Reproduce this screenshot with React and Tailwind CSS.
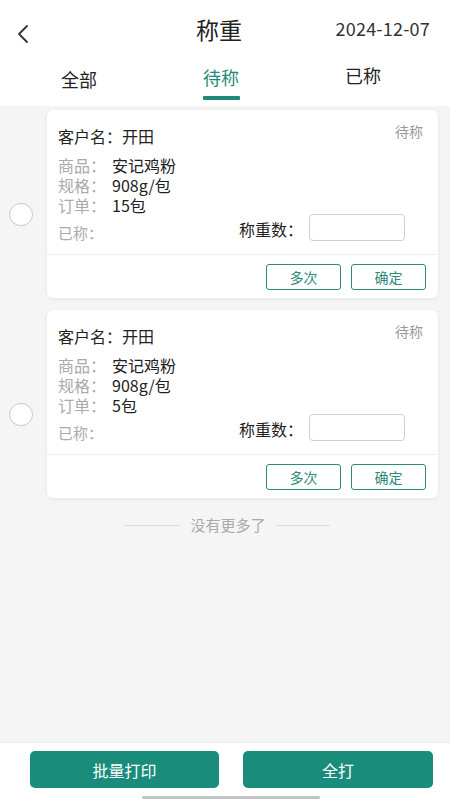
import React from "react";

const font = { fontFamily: '"Noto Sans CJK SC", "Noto Sans", sans-serif' };

function Card({ qty }) {
  return (
    <div className="flex items-start">
      <div className="w-[47px] flex justify-start pl-[9px] mt-[93px]">
        <div className="w-[24px] h-[23px] rounded-full border border-[#c8c8c8] bg-white" />
      </div>
      <div className="w-[391px] bg-white rounded-[6px] shadow-[0_1px_4px_rgba(0,0,0,0.08)]">
        <div className="pl-[11px] pr-[15px] pt-[14px] pb-[13px]">
          <div className="flex justify-between items-start">
            <div className="text-[16px] leading-[24px] text-[#222]">客户名：开田</div>
            <div className="text-[14px] leading-[20px] text-[#999] -mt-[3px]">待称</div>
          </div>
          <div className="mt-[7px] text-[16px] leading-[20px]">
            <div className="flex h-[20px]">
              <span className="w-[54px] text-[#aaa]">商品：</span>
              <span className="text-[#222]">安记鸡粉</span>
            </div>
            <div className="flex h-[20px]">
              <span className="w-[54px] text-[#aaa]">规格：</span>
              <span className="text-[#222]">908g/包</span>
            </div>
            <div className="flex h-[20px]">
              <span className="w-[54px] text-[#aaa]">订单：</span>
              <span className="text-[#222]">{qty}</span>
            </div>
          </div>
          <div className="flex items-start justify-between h-[27px] -mt-[1px]">
            <span className="text-[15px] leading-[20px] text-[#aaa] pt-[9px]">已称：</span>
            <div className="flex items-center mr-[18px]">
              <span className="text-[16px] leading-[20px] text-[#222] mr-[6px] mt-[3px]">称重数：</span>
              <div className="w-[96px] h-[27px] border border-[#d0d0d0] rounded-[4px]" />
            </div>
          </div>
        </div>
        <div className="border-t border-[#efefef] flex justify-end gap-[10px] pr-[12px] pt-[9px] pb-[8px]">
          <button className="w-[75px] h-[26px] border-[1.5px] border-[#2a8a7c] rounded-[3px] text-[14px] leading-none text-[#2a8a7c] bg-white">多次</button>
          <button className="w-[75px] h-[26px] border-[1.5px] border-[#2a8a7c] rounded-[3px] text-[14px] leading-none text-[#2a8a7c] bg-white">确定</button>
        </div>
      </div>
    </div>
  );
}

export default function App() {
  return (
    <div style={font} className="w-[450px] h-[800px] flex flex-col bg-[#f5f5f5] overflow-hidden">
      <div className="bg-white">
        <div className="h-[60px] flex items-center relative px-[16px]">
          <svg width="14" height="20" viewBox="0 0 14 20" className="mt-[8px]">
            <path d="M11 2 L3 10 L11 18" fill="none" stroke="#333" strokeWidth="1.8" strokeLinecap="round" strokeLinejoin="round" />
          </svg>
          <div className="absolute left-0 right-0 pr-[12px] text-center text-[23px] text-[#222] pointer-events-none -mt-[1px]">称重</div>
          <div className="ml-auto text-[18px] tracking-[0.2px] text-[#333] -mt-[4px] mr-[4px]">2024-12-07</div>
        </div>
        <div className="h-[46px] flex pl-[8px]">
          <div className="w-[142px] flex flex-col items-center">
            <span className="text-[18px] leading-[24px] text-[#222] mt-[7px]">全部</span>
          </div>
          <div className="w-[142px] flex flex-col items-center">
            <span className="text-[18px] leading-[24px] text-[#1f8a7a] mt-[5px]">待称</span>
            <div className="w-[37px] h-[4px] bg-[#1f8a7a] mt-[7px] rounded-[1px]" />
          </div>
          <div className="w-[142px] flex flex-col items-center">
            <span className="text-[18px] leading-[24px] text-[#222] mt-[3px]">已称</span>
          </div>
        </div>
      </div>
      <div className="flex-1 flex flex-col pt-[4px] gap-[12px]">
        <Card qty="15包" />
        <Card qty="5包" />
        <div className="flex items-center justify-center mt-[4px] ml-[4px]">
          <div className="w-[56px] h-px bg-[#dedede]" />
          <span className="text-[15px] leading-[22px] text-[#aaa] mx-[10px]">没有更多了</span>
          <div className="w-[54px] h-px bg-[#dedede]" />
        </div>
      </div>
      <div className="h-[58px] bg-white border-t border-[#eaeaea] relative">
        <div className="flex gap-[24px] pl-[30px] pt-[8px]">
          <button className="w-[189px] h-[37px] rounded-[5px] bg-[#1a8c7c] text-white text-[16px]">批量打印</button>
          <button className="w-[190px] h-[37px] rounded-[5px] bg-[#1a8c7c] text-white text-[16px]">全打</button>
        </div>
        <div className="absolute left-[142px] bottom-[1px] w-[178px] h-[3px] bg-[#c4c4c4] rounded-full" />
      </div>
    </div>
  );
}
